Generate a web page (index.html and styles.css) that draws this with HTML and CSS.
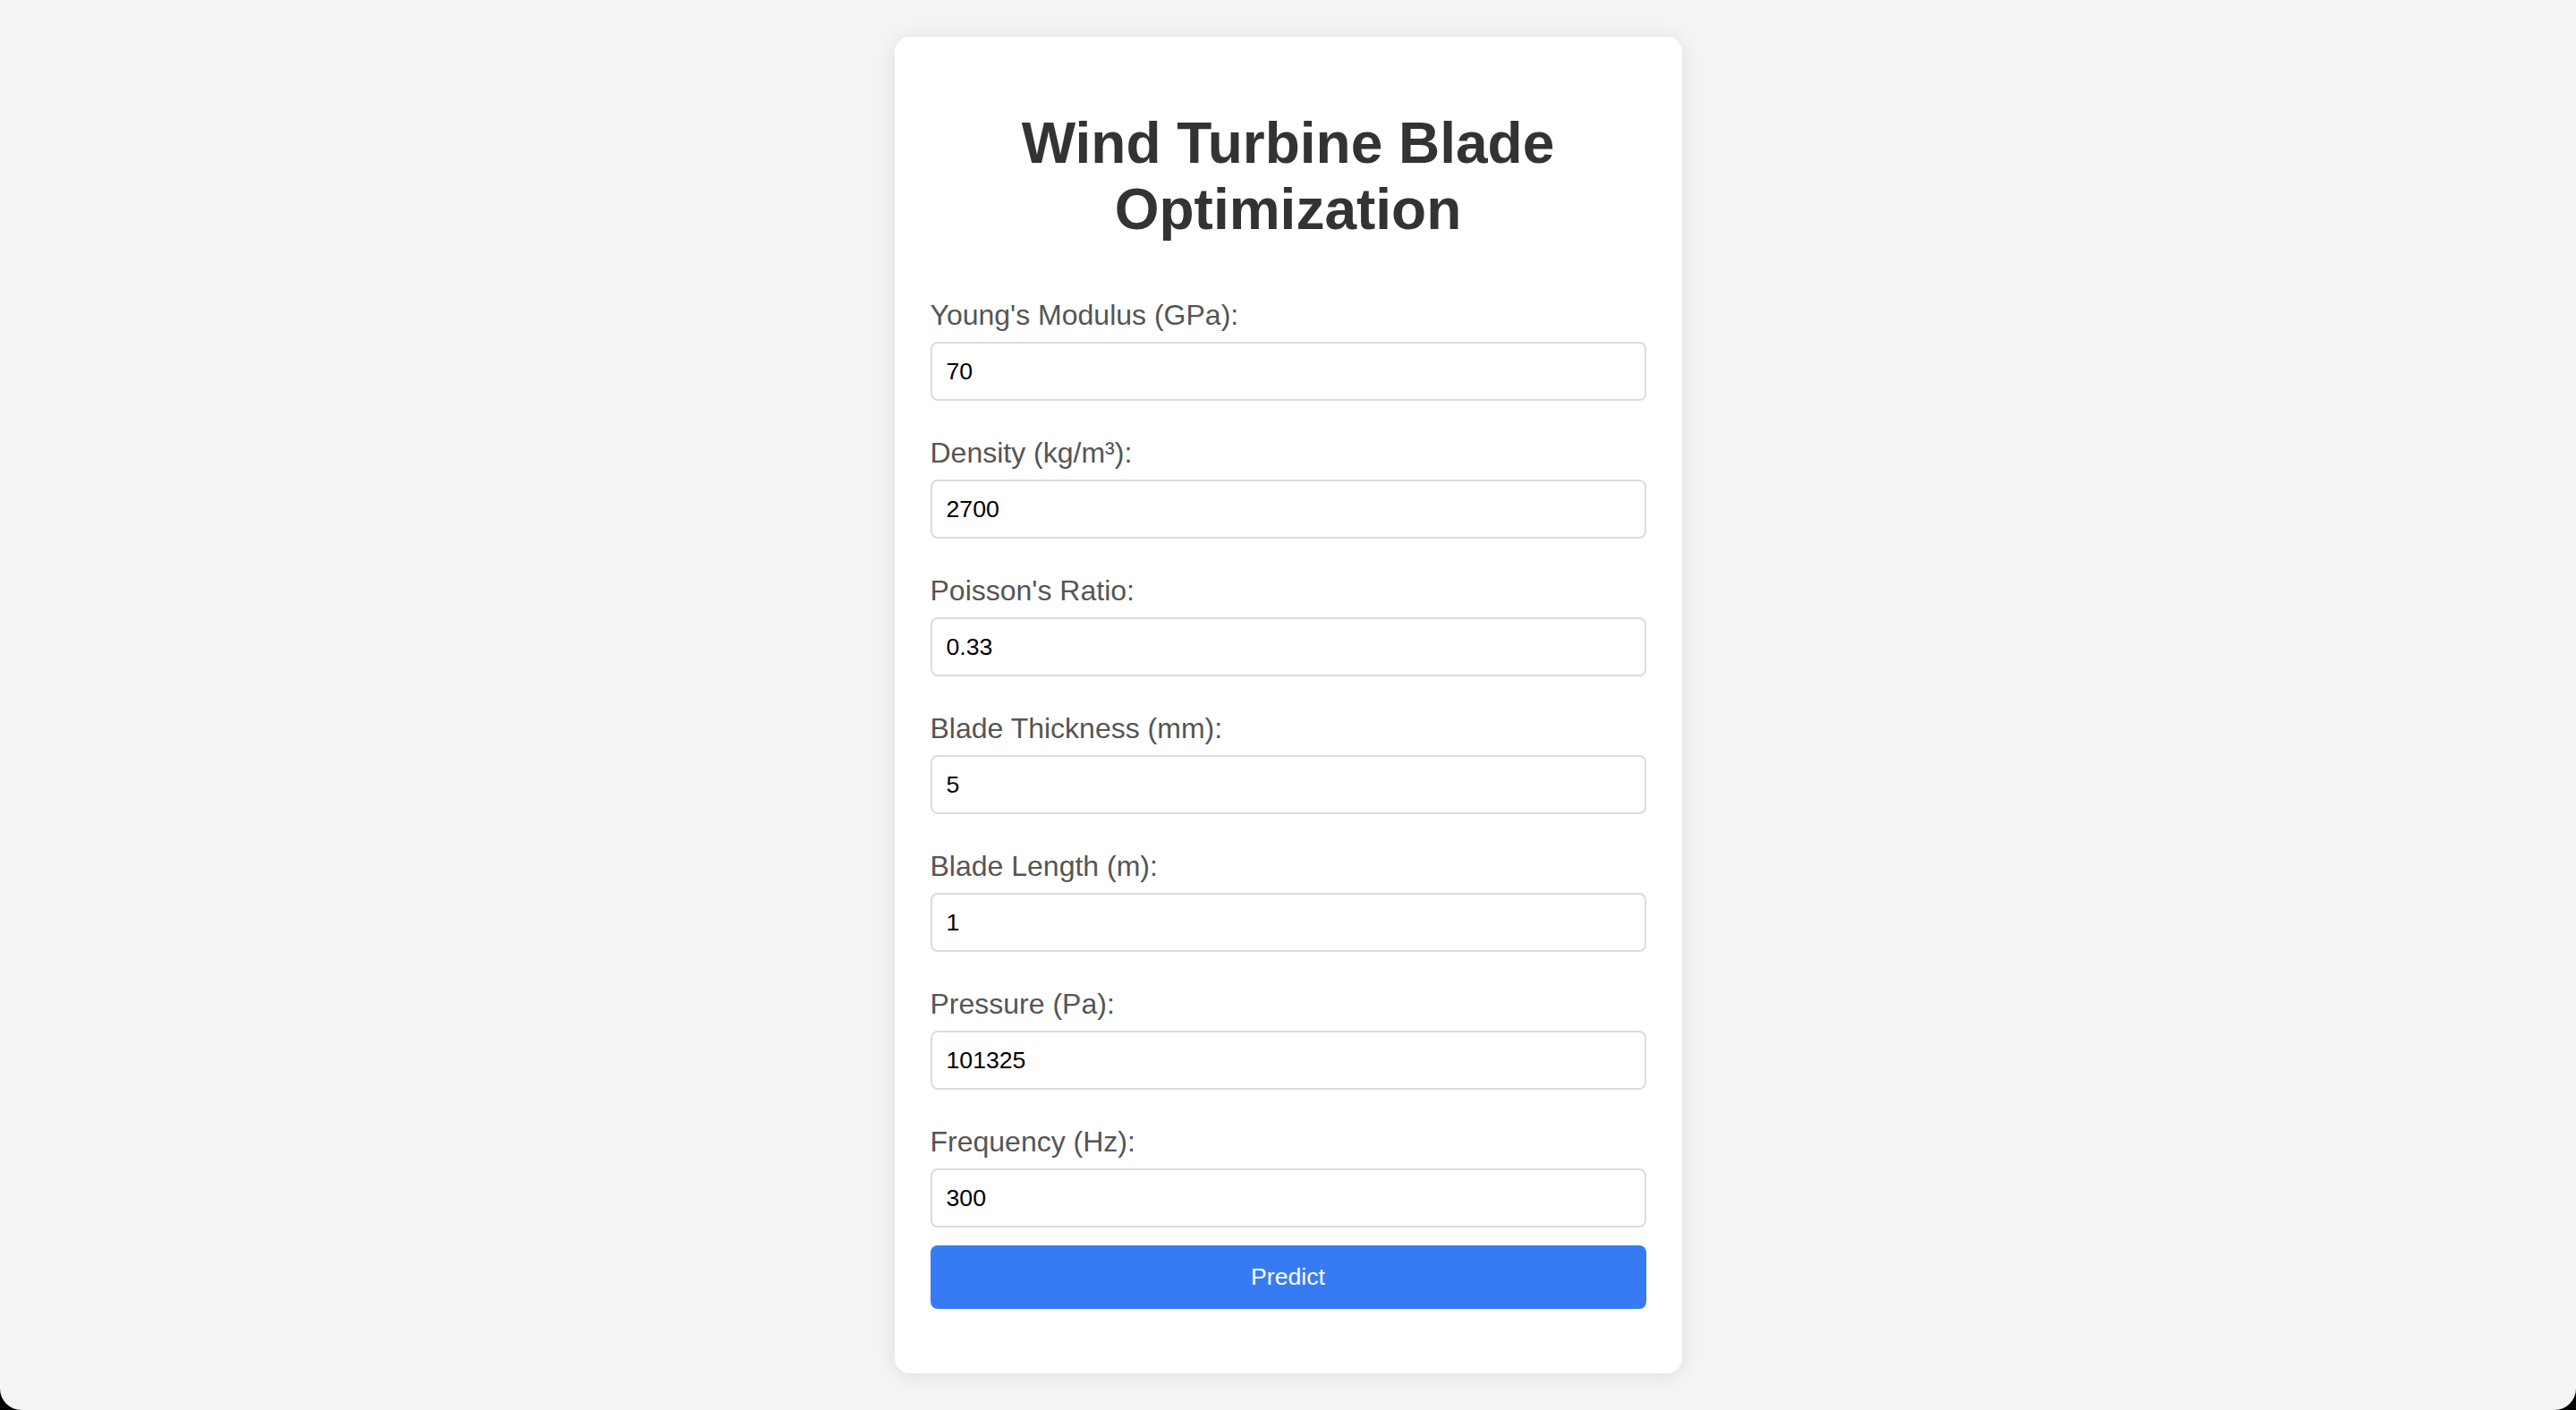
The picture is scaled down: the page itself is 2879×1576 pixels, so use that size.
FILE: index.html
```html
<!DOCTYPE html>
<html lang="en">
<head>
<meta charset="utf-8">
<title>Wind Turbine Blade Optimization</title>
<link rel="stylesheet" href="styles.css">
</head>
<body>
<div class="card">
  <h1 class="title">Wind Turbine Blade Optimization</h1>
  <form class="form">
    <div class="group">
      <label class="label" for="ym">Young's Modulus (GPa):</label>
      <input class="input" id="ym" type="text" value="70">
    </div>
    <div class="group">
      <label class="label" for="den">Density (kg/m³):</label>
      <input class="input" id="den" type="text" value="2700">
    </div>
    <div class="group">
      <label class="label" for="pr">Poisson's Ratio:</label>
      <input class="input" id="pr" type="text" value="0.33">
    </div>
    <div class="group">
      <label class="label" for="bt">Blade Thickness (mm):</label>
      <input class="input" id="bt" type="text" value="5">
    </div>
    <div class="group">
      <label class="label" for="bl">Blade Length (m):</label>
      <input class="input" id="bl" type="text" value="1">
    </div>
    <div class="group">
      <label class="label" for="pa">Pressure (Pa):</label>
      <input class="input" id="pa" type="text" value="101325">
    </div>
    <div class="group group-last">
      <label class="label" for="fq">Frequency (Hz):</label>
      <input class="input" id="fq" type="text" value="300">
    </div>
    <button class="button" type="button">Predict</button>
  </form>
</div>
</body>
</html>
```
FILE: styles.css
```css
* { box-sizing: border-box; }

html {
  background: #000;
  height: 100%;
}

body {
  margin: 0;
  height: 100vh;
  overflow: hidden;
  padding-top: 41px;
  background: #f4f4f4;
  border-radius: 0 0 24px 24px;
  font-family: "Liberation Sans", Arial, Helvetica, sans-serif;
}

.card {
  width: 880px;
  margin: 0 auto;
  background: #fff;
  border-radius: 17px;
  padding: 40px 40px 40px;
  box-shadow: 0 2px 22px rgba(0, 0, 0, 0.09);
}

.title {
  margin: 42px 0 63px;
  font-size: 64px;
  line-height: 74px;
  font-weight: bold;
  color: #333;
  text-align: center;
}

.form {
  margin: 0 0 32px;
}

.group {
  margin-bottom: 40px;
}

.group-last {
  margin-bottom: 20px;
}

.label {
  display: block;
  font-size: 32px;
  line-height: 37px;
  color: #555;
  margin-bottom: 11px;
}

.input {
  display: block;
  width: 100%;
  height: 66px;
  padding: 0 16px;
  border: 2px solid #dcdcdc;
  border-radius: 8px;
  font-family: "Liberation Sans", Arial, Helvetica, sans-serif;
  font-size: 26.67px;
  color: #000;
  background: #fff;
  outline: none;
}

.button {
  display: block;
  width: 100%;
  height: 71px;
  border: none;
  border-radius: 8px;
  background: #377bf4;
  color: #fff;
  font-family: "Liberation Sans", Arial, Helvetica, sans-serif;
  font-size: 26.67px;
  cursor: pointer;
}
```
